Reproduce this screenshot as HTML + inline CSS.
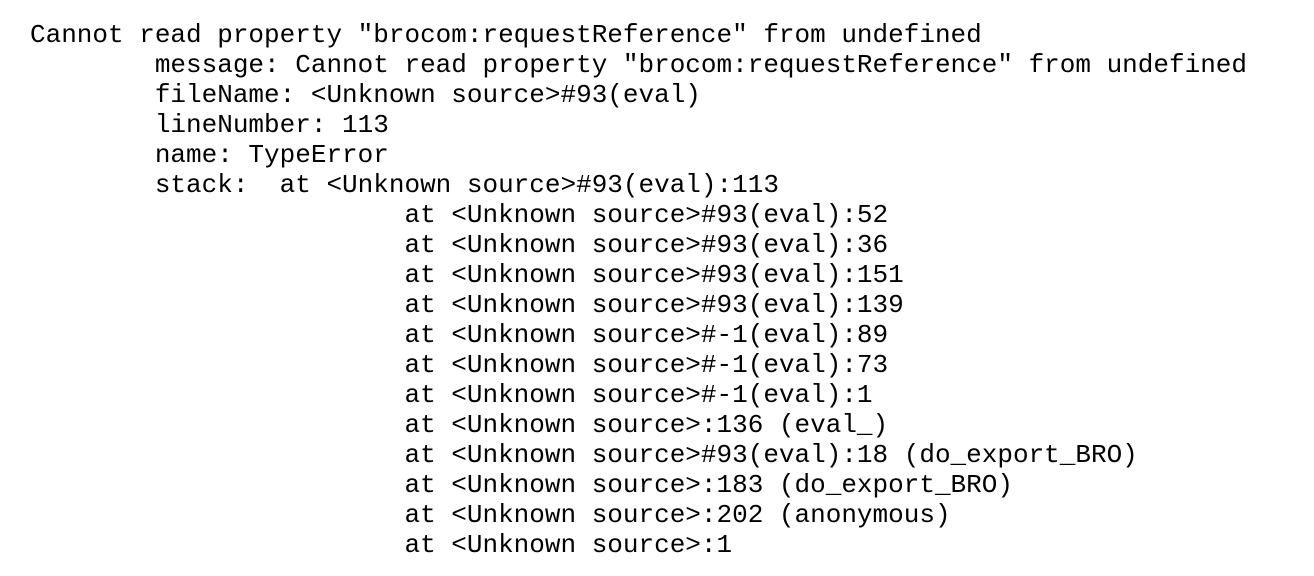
<!DOCTYPE html>
<html><head><meta charset="utf-8"><style>
html,body{margin:0;padding:0;background:#fff;width:1314px;height:576px;overflow:hidden}
pre{position:absolute;left:30px;top:20px;margin:0;font-family:"Liberation Mono",monospace;font-size:26px;line-height:30px;color:#000}
</style></head><body><pre>Cannot read property "brocom:requestReference" from undefined
        message: Cannot read property "brocom:requestReference" from undefined
        fileName: &lt;Unknown source&gt;#93(eval)
        lineNumber: 113
        name: TypeError
        stack:  at &lt;Unknown source&gt;#93(eval):113
                        at &lt;Unknown source&gt;#93(eval):52
                        at &lt;Unknown source&gt;#93(eval):36
                        at &lt;Unknown source&gt;#93(eval):151
                        at &lt;Unknown source&gt;#93(eval):139
                        at &lt;Unknown source&gt;#-1(eval):89
                        at &lt;Unknown source&gt;#-1(eval):73
                        at &lt;Unknown source&gt;#-1(eval):1
                        at &lt;Unknown source&gt;:136 (eval_)
                        at &lt;Unknown source&gt;#93(eval):18 (do_export_BRO)
                        at &lt;Unknown source&gt;:183 (do_export_BRO)
                        at &lt;Unknown source&gt;:202 (anonymous)
                        at &lt;Unknown source&gt;:1</pre></body></html>
